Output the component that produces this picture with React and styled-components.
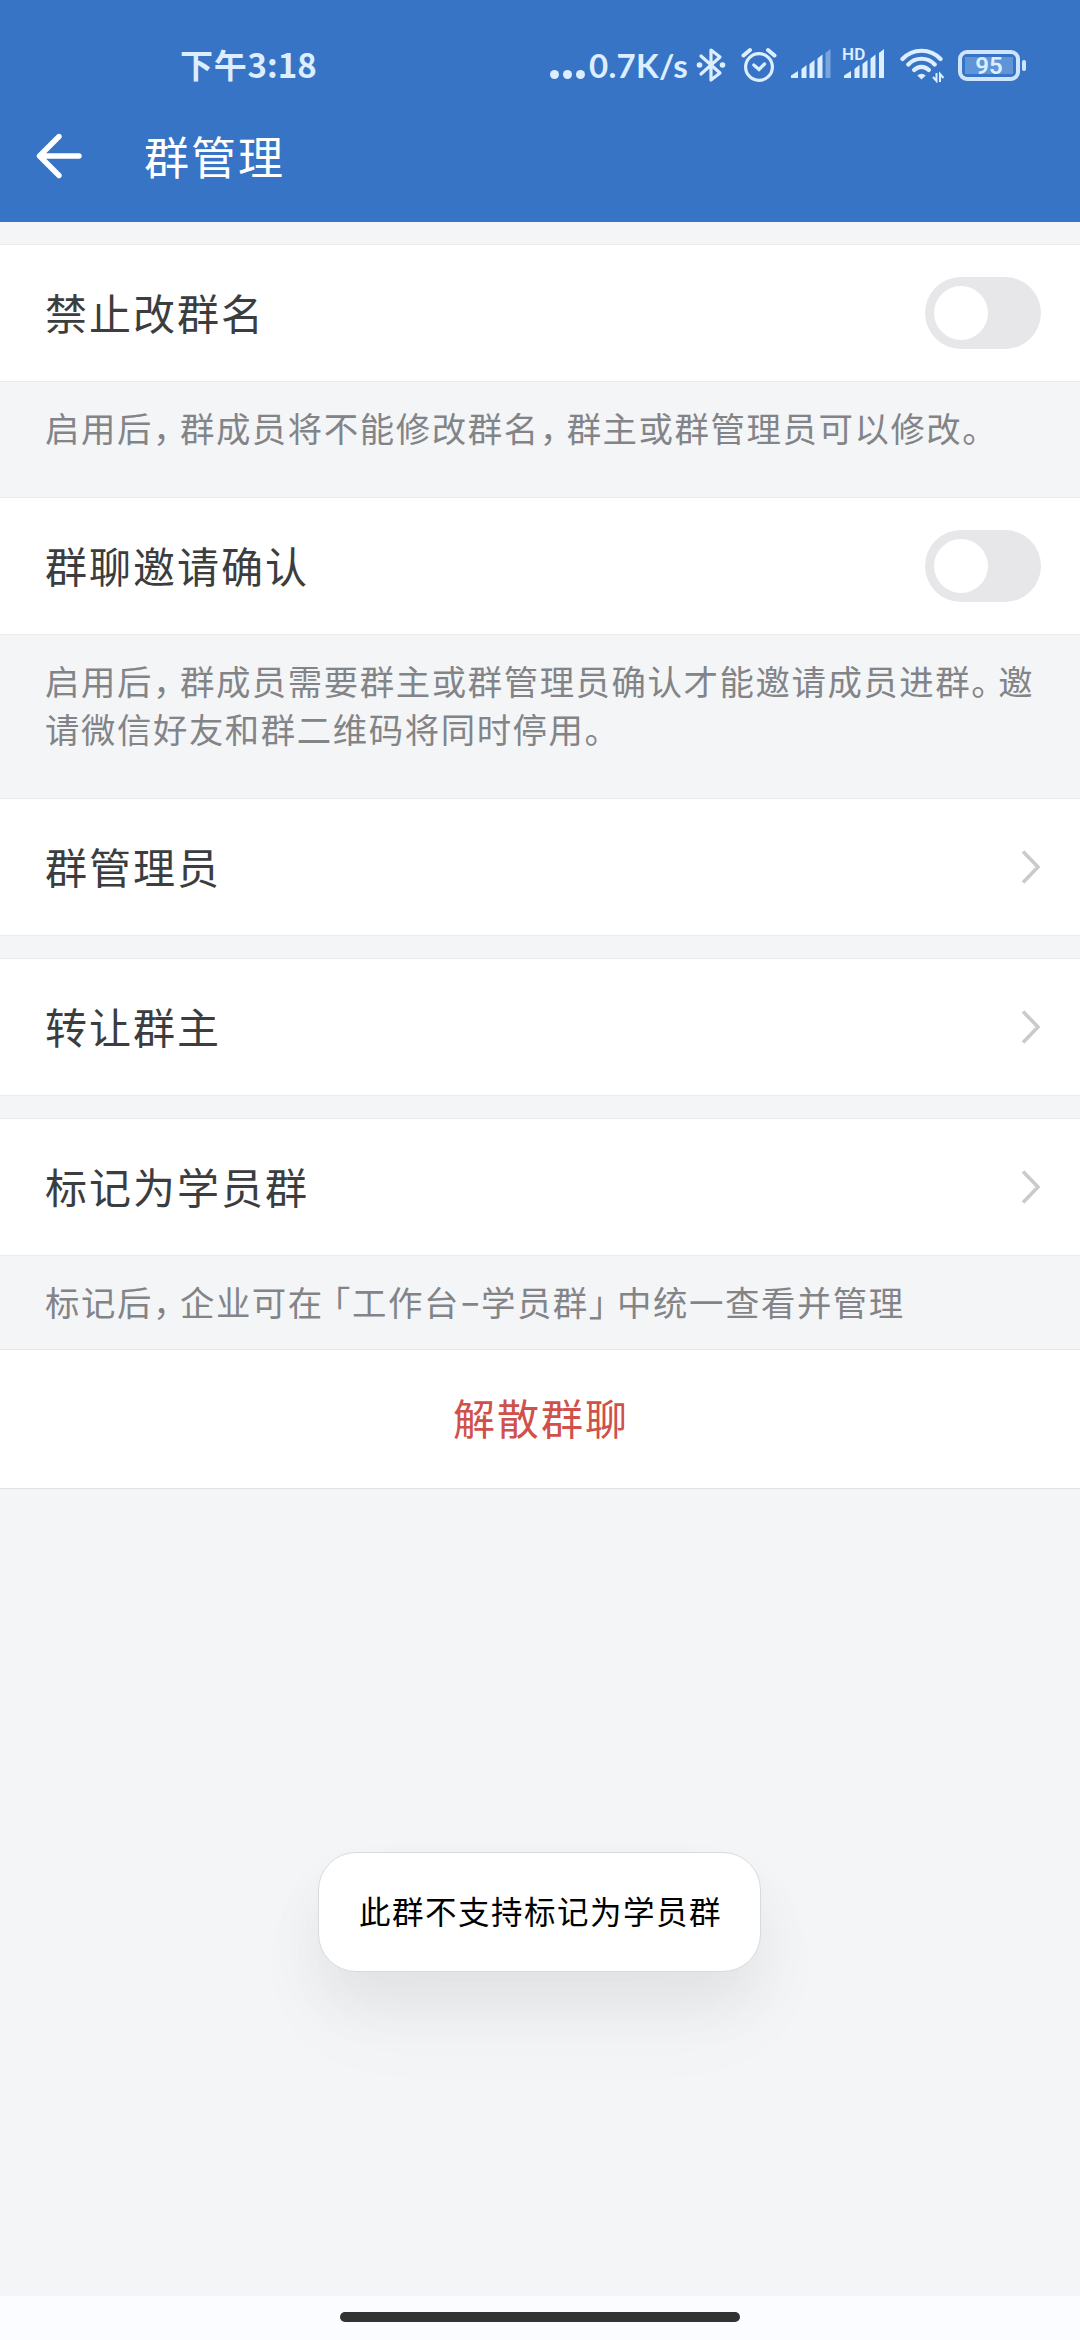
import styled, { createGlobalStyle } from "styled-components"

const App = () => {
  return (
    <Phone>
      <GlobalStyle />
      <Header>
        <StatusBar>
          <Time>下午<span>3:18</span></Time>
          <StatusIcons />
        </StatusBar>
        <TitleBar>
          <BackIcon viewBox="0 0 48 48">
            <path d="M23 4.500L3.500 24L23 43.500M4.500 24H43" />
          </BackIcon>
          <h1>群管理</h1>
        </TitleBar>
      </Header>

      <Content>
        <Row>
          <RowTitle>禁止改群名</RowTitle>
          <Toggle />
        </Row>
        <Desc $height={115}>
          启用后<Comma>，</Comma>群成员将不能修改群名<Comma>，</Comma>群主或群管理员可以修改。
        </Desc>
        <Row>
          <RowTitle>群聊邀请确认</RowTitle>
          <Toggle />
        </Row>
        <Desc $height={163}>
          启用后<Comma>，</Comma>群成员需要群主或群管理员确认才能邀请成员进群<Comma>。</Comma>邀
          <br />
          请微信好友和群二维码将同时停用。
        </Desc>
        <Row>
          <RowTitle>群管理员</RowTitle>
          <Chevron />
        </Row>
        <Gap />
        <Row>
          <RowTitle>转让群主</RowTitle>
          <Chevron />
        </Row>
        <Gap />
        <Row>
          <RowTitle>标记为学员群</RowTitle>
          <Chevron />
        </Row>
        <Desc $height={93}>
          标记后<Comma>，</Comma>企业可在<OpenQuote>「</OpenQuote>工作台<Dash>–</Dash>学员群<CloseQuote>」</CloseQuote>中统一查看并管理
        </Desc>
        <DangerRow>解散群聊</DangerRow>
      </Content>

      <NavBar><span /></NavBar>
      <Toast>此群不支持标记为学员群</Toast>
    </Phone>
  )
}

export default App

const StatusIcons = () => (
  <Icons>
    <Dots><i /><i /><i /></Dots>
    <Speed>0.7K/s</Speed>
    <BluetoothIcon viewBox="0 0 30 36">
      <path d="M5 9L24 26L15 33V3L24 10L5 27" />
      <circle cx="3.500" cy="18" r="2.800" />
      <circle cx="26.500" cy="18" r="2.800" />
    </BluetoothIcon>
    <AlarmIcon viewBox="0 0 36 36">
      <circle cx="18" cy="20" r="13.400" />
      <path d="M12.800 18L18 22.500L23.500 17" />
      <path className="bell" d="M2.500 8.500L9 3M33.500 8.500L27 3" />
    </AlarmIcon>
    <SignalIcon viewBox="0 0 42 36">
      <path d="M1 31v-2.500l7-4.500v7zM11.500 31V22l5-4v13zM19.500 31V17l5-4v18zM27.500 31V11.500l5-4V31z" />
      <path opacity=".4" d="M35.500 31V6l5-4v29z" />
    </SignalIcon>
    <HdSignal>
      <b>HD</b>
      <svg viewBox="0 0 42 36">
        <path d="M1 31v-2.500l7-4.500v7zM11.500 31V22l5-4v13zM19.500 31V17l5-4v18zM27.500 31V11.500l5-4V31zM36 31V6l5-4v29z" />
      </svg>
    </HdSignal>
    <WifiIcon viewBox="0 0 44 36">
      <path className="arc" d="M2.500 12A26 26 0 0 1 40.500 12M8.300 17.500A18 18 0 0 1 34.700 17.500M14.200 23A10 10 0 0 1 28.800 23" />
      <path d="M17.300 28.500Q21.500 25 25.700 28.500L21.500 32.500z" />
      <path className="arrows" d="M36.500 26V34l-3.500-4M40 35v-8l3.500 4" />
    </WifiIcon>
    <Battery><span>95</span></Battery>
  </Icons>
)

const Chevron = () => (
  <ChevronIcon viewBox="0 0 20 36">
    <path d="M2 2.500L17 18L2 33.500" />
  </ChevronIcon>
)

const Toggle = () => <Switch type="button" role="switch" aria-checked="false"><i /></Switch>

const GlobalStyle = createGlobalStyle`
*{box-sizing:border-box;}
body{
  margin:0;
  font-family:"Noto Sans CJK SC",sans-serif;
  background:#f4f5f7;
}
`
const Phone = styled.div`
position:relative;
display:flex;
flex-direction:column;
width:1080px;
height:2340px;
overflow:hidden;
background:#f4f5f7;
`
const Header = styled.header`
height:222px;
background:#3874c6;
color:#fff;
`
const StatusBar = styled.div`
display:flex;
justify-content:space-between;
height:96px;
padding:34px 54px 0 180px;
color:#dceeff;
`
const Time = styled.div`
height:60px;
line-height:60px;
font-size:33px;
font-weight:700;
letter-spacing:0.8px;
span{
  letter-spacing:0;
}
`
const Icons = styled.div`
display:flex;
align-items:center;
height:62px;
svg{
  flex:none;
  height:36px;
  fill:currentColor;
}
`
const Dots = styled.div`
display:flex;
gap:4px;
margin:18px 4px 0 0;
i{
  width:9px;
  height:9px;
  border-radius:50%;
  background:#dceeff;
}
`
const Speed = styled.div`
width:107px;
font-family:Lato,sans-serif;
font-size:33px;
font-weight:700;
line-height:62px;
letter-spacing:0.3px;
white-space:nowrap;
`
const BluetoothIcon = styled.svg`
width:30px;
margin-right:15px;
path{
  fill:none;
  stroke:currentColor;
  stroke-width:3.2;
  stroke-linecap:round;
  stroke-linejoin:round;
}
`
const AlarmIcon = styled.svg`
width:36px;
margin-right:13px;
circle,path{
  fill:none;
  stroke:currentColor;
  stroke-width:3.2;
  stroke-linecap:round;
}
.bell{
  stroke-width:4;
}
`
const SignalIcon = styled.svg`
width:42px;
margin-right:11px;
`
const HdSignal = styled.div`
position:relative;
height:36px;
margin-right:15px;
svg{
  width:42px;
}
b{
  position:absolute;
  left:-1px;
  top:1px;
  font-family:Roboto,sans-serif;
  font-size:17px;
  font-weight:600;
  line-height:13px;
  letter-spacing:0.3px;
  background:#3874c6;
}
`
const WifiIcon = styled.svg`
width:44px;
margin-right:14px;
.arc{
  fill:none;
  stroke:currentColor;
  stroke-width:4.2;
  stroke-linecap:round;
}
.arrows{
  fill:none;
  stroke:currentColor;
  stroke-width:2;
}
`
const Battery = styled.div`
position:relative;
display:flex;
width:62px;
height:31px;
margin-right:6px;
padding:3px;
border:4px solid #cfe5ff;
border-radius:9px;
span{
  flex:1;
  background:#6094d8;
  font-family:Roboto,sans-serif;
  font-size:24px;
  font-weight:600;
  line-height:18px;
  text-align:center;
}
&::after{
  content:"";
  position:absolute;
  right:-10px;
  top:6px;
  width:4px;
  height:11px;
  border-radius:2px;
  background:#cfe5ff;
}
`
const TitleBar = styled.div`
display:flex;
align-items:center;
height:120px;
padding-left:36px;
h1{
  margin:-1px 0 0 60px;
  font-size:45px;
  font-weight:400;
  line-height:64px;
  letter-spacing:2px;
}
`
const BackIcon = styled.svg`
width:48px;
height:48px;
fill:none;
stroke:#fff;
stroke-width:5.4;
stroke-linecap:round;
stroke-linejoin:round;
`
const Content = styled.main`
flex:1;
padding-top:22px;
`
const Row = styled.section`
display:flex;
align-items:center;
justify-content:space-between;
height:138px;
padding:0 39px 0 45px;
background:#fff;
border-top:1px solid #e9ebed;
border-bottom:1px solid #e9ebed;
`
const RowTitle = styled.h2`
margin:-3px 0 0;
color:#3b3d3f;
font-size:42px;
font-weight:400;
line-height:60px;
letter-spacing:2px;
`
const Switch = styled.button`
all:unset;
box-sizing:border-box;
width:116px;
height:72px;
padding:9px;
border-radius:36px;
background:#e7e7ea;
i{
  display:block;
  width:54px;
  height:54px;
  border-radius:50%;
  background:#fff;
}
`
const ChevronIcon = styled.svg`
width:20px;
height:36px;
fill:none;
stroke:#c9cacb;
stroke-width:3.6;
`
const Desc = styled.p`
height:${(props) => props.$height}px;
margin:0;
padding:21px 0 0 45px;
color:#828488;
font-size:34.4px;
line-height:48px;
letter-spacing:1.58px;
white-space:nowrap;
`
/* punctuation is set half-width, then spaced out again on its open side */
const HalfWidth = styled.span`
font-feature-settings:"halt";
`
const Comma = styled(HalfWidth)`
letter-spacing:9.8px;
`
const OpenQuote = styled(HalfWidth)`
margin-left:9.4px;
`
const CloseQuote = styled(HalfWidth)`
letter-spacing:11px;
`
const Dash = styled.span`
display:inline-block;
width:21px;
font-weight:500;
line-height:1;
text-align:center;
letter-spacing:0;
vertical-align:2px;
`
const Gap = styled.div`
height:22px;
`
const DangerRow = styled.button`
all:unset;
box-sizing:border-box;
display:flex;
align-items:center;
justify-content:center;
width:100%;
height:140px;
padding:0 0 5px 2px;
background:#fff;
border-top:1px solid #e4e6e8;
border-bottom:1px solid #dfe1e3;
color:#d0504a;
font-size:42px;
line-height:60px;
letter-spacing:2px;
`
const NavBar = styled.footer`
display:flex;
justify-content:center;
height:44px;
padding-top:16px;
background:#fbfcff;
span{
  width:400px;
  height:10px;
  border-radius:5px;
  background:#323232;
}
`
const Toast = styled.div`
position:absolute;
left:318px;
top:1852px;
width:443px;
height:120px;
padding-left:2px;
border:1px solid #d8dadb;
border-radius:38px;
background:#fff;
box-shadow:0 32px 56px rgba(0,0,0,0.055),0 50px 100px rgba(0,0,0,0.03);
color:#000;
font-size:31.5px;
line-height:115px;
letter-spacing:1.5px;
text-align:center;
`
